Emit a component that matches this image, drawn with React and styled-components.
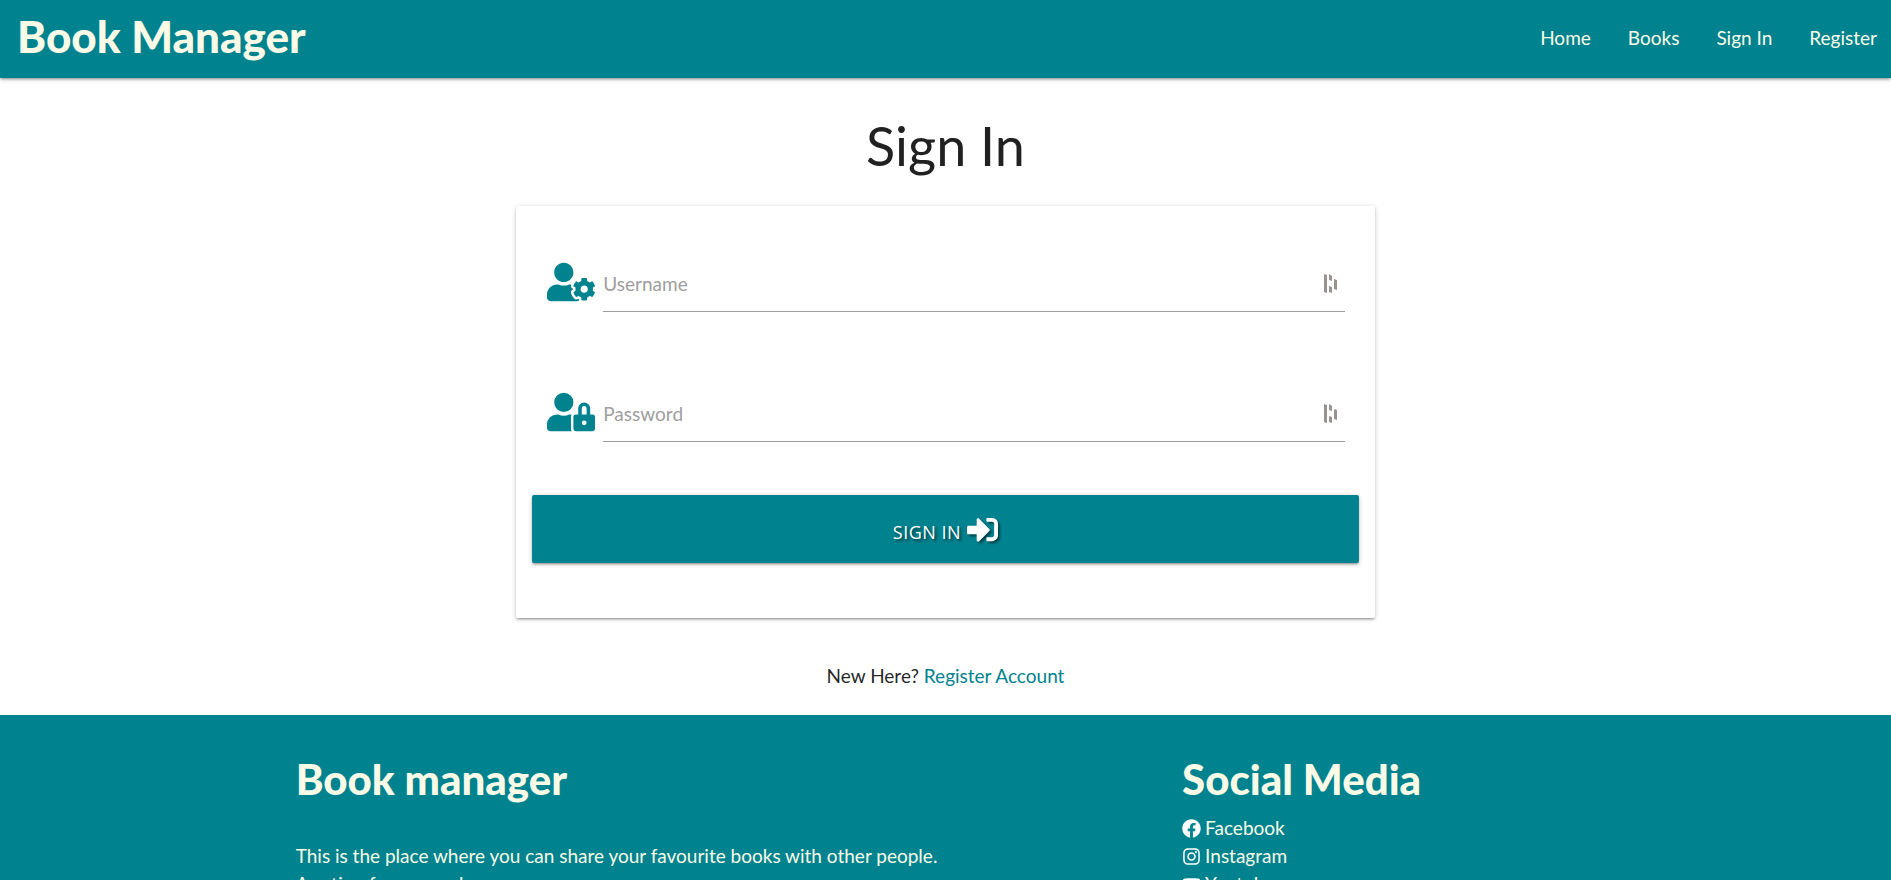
import React from 'react';
import styled, { createGlobalStyle } from 'styled-components';
import {
  FaUserCog, FaUserLock, FaSignInAlt, FaFacebook, FaInstagram, FaYoutube,
} from 'react-icons/fa';

const teal = '#00838f';
const cream = '#f9fbe7';

const GlobalStyle = createGlobalStyle`
  *, *::before, *::after { box-sizing: border-box; }
  body {
    margin: 0;
    font-family: Lato, "Liberation Sans", sans-serif;
    font-size: 19px;
    line-height: 28px;
    color: rgba(0, 0, 0, 0.87);
    background: #fff;
  }
  a { color: inherit; text-decoration: none; }
`;

const Header = styled.header`
  position: relative;
  display: flex;
  align-items: center;
  justify-content: space-between;
  height: 78px;
  padding: 0 14px 2px 17px;
  background: ${teal};
  color: ${cream};
  box-shadow: 0 2px 2px 0 rgba(0,0,0,0.14), 0 3px 1px -2px rgba(0,0,0,0.12), 0 1px 5px 0 rgba(0,0,0,0.2);
`;

const Brand = styled.a`
  font-size: 44px;
  font-weight: 900;
  line-height: 72px;
  padding-bottom: 4px;
`;

const Nav = styled.nav`
  display: flex;
  gap: 37px;
`;

const Main = styled.main`
  width: 70%;
  margin: 0 auto;
  padding-top: 35px;
`;

const Title = styled.h1`
  margin: 0 0 27px;
  font-size: 54px;
  font-weight: 400;
  line-height: 66px;
  text-align: center;
`;

const Card = styled.form`
  width: calc(100% * 2 / 3 - 24px);
  margin: 0 auto;
  padding: 45px 16px 55px;
  border-radius: 2px;
  background: #fff;
  box-shadow: 0 2px 2px 0 rgba(0,0,0,0.14), 0 3px 1px -2px rgba(0,0,0,0.12), 0 1px 5px 0 rgba(0,0,0,0.2);
`;

const Field = styled.div`
  display: flex;
  align-items: flex-start;
  gap: 8px;
  height: 130px;
  padding: 10px 14px 0 15px;
  color: ${teal};

  > svg { flex: none; width: 48px; height: 42px; }
`;

const InputLine = styled.div`
  flex: 1;
  display: flex;
  align-items: center;
  height: 51px;
  padding: 0 6px 5px 0;
  border-bottom: 1px solid #9e9e9e;
  color: #9e9e9e;
`;

const Input = styled.input`
  flex: 1;
  min-width: 0;
  height: 45px;
  padding: 0;
  border: 0;
  outline: 0;
  background: transparent;
  font: inherit;
  color: rgba(0, 0, 0, 0.87);
  &::placeholder { color: #9e9e9e; opacity: 1; }
`;

const Submit = styled.button`
  display: flex;
  align-items: center;
  justify-content: center;
  gap: 6px;
  width: 100%;
  height: 68px;
  margin-top: -16px;
  border: 0;
  border-radius: 2px;
  background: ${teal};
  color: #fff;
  font-family: "Open Sans", "Noto Sans", sans-serif;
  font-size: 18px;
  letter-spacing: 0.5px;
  text-transform: uppercase;
  text-shadow: 2px 2px 3px rgba(0,0,0,0.6);
  cursor: pointer;
  box-shadow: 0 2px 2px 0 rgba(0,0,0,0.14), 0 3px 1px -2px rgba(0,0,0,0.12), 0 1px 5px 0 rgba(0,0,0,0.2);

  svg { width: 31px; height: 31px; filter: drop-shadow(2px 2px 1px rgba(0,0,0,0.5)); }
  span { padding-top: 6px; }
`;

const Prompt = styled.p`
  margin: 44px 0 25px;
  text-align: center;
  a { color: ${teal}; }
`;

const Footer = styled.footer`
  background: ${teal};
  color: ${cream};
  padding: 38px 0 30px;
`;

const FooterRow = styled.div`
  display: grid;
  grid-template-columns: 2fr 1fr;
  width: calc(70% + 6px);
  margin: 0 auto;
`;

const FooterColumn = styled.section`
  padding: 0 15px;
`;

const FooterTitle = styled.h2`
  margin: 0;
  font-size: 42px;
  font-weight: 900;
  line-height: 52px;
`;

const About = styled.p`
  margin: 37px 0 0;
`;

const SocialList = styled.ul`
  margin: 9px 0 0;
  padding: 0;
  list-style: none;
`;

const SocialLink = styled.a`
  display: flex;
  align-items: center;
  gap: 4px;
  svg { height: 19px; width: auto; color: #fff; }
`;

const KeyMark = () => (
  <svg width="16" height="20" viewBox="0 0 16 20" fill="#989390" aria-hidden="true">
    <path d="M1 0l3 1v18l-3-1zM6 0l3 2v5l-3-1zM6 12l3 1v6l-3-1zM11 5l3 1v10l-3-1z" />
  </svg>
);

const fields = [
  { id: 'username', label: 'Username', type: 'text', Icon: FaUserCog },
  { id: 'password', label: 'Password', type: 'password', Icon: FaUserLock },
];

const socials = [
  { name: 'Facebook', Icon: FaFacebook },
  { name: 'Instagram', Icon: FaInstagram },
  { name: 'Youtube', Icon: FaYoutube },
];

export default function App() {
  return (
    <>
      <GlobalStyle />
      <Header>
        <Brand href="#home">Book Manager</Brand>
        <Nav>
          <a href="#home">Home</a>
          <a href="#books">Books</a>
          <a href="#sign-in">Sign In</a>
          <a href="#register">Register</a>
        </Nav>
      </Header>
      <Main>
        <Title>Sign In</Title>
        <Card onSubmit={(e) => e.preventDefault()}>
          {fields.map(({ id, label, type, Icon }) => (
            <Field key={id}>
              <Icon aria-hidden="true" />
              <InputLine>
                <Input id={id} type={type} placeholder={label} aria-label={label} />
                <KeyMark />
              </InputLine>
            </Field>
          ))}
          <Submit type="submit"><span>Sign In</span><FaSignInAlt aria-hidden="true" /></Submit>
        </Card>
        <Prompt>New Here? <a href="#register">Register Account</a></Prompt>
      </Main>
      <Footer>
        <FooterRow>
          <FooterColumn>
            <FooterTitle>Book manager</FooterTitle>
            <About>
              This is the place where you can share your favourite books with other people.
              <br />
              A setion for you and me.
            </About>
          </FooterColumn>
          <FooterColumn>
            <FooterTitle>Social Media</FooterTitle>
            <SocialList>
              {socials.map(({ name, Icon }) => (
                <li key={name}>
                  <SocialLink href={`#${name.toLowerCase()}`}><Icon aria-hidden="true" />{name}</SocialLink>
                </li>
              ))}
            </SocialList>
          </FooterColumn>
        </FooterRow>
      </Footer>
    </>
  );
}
